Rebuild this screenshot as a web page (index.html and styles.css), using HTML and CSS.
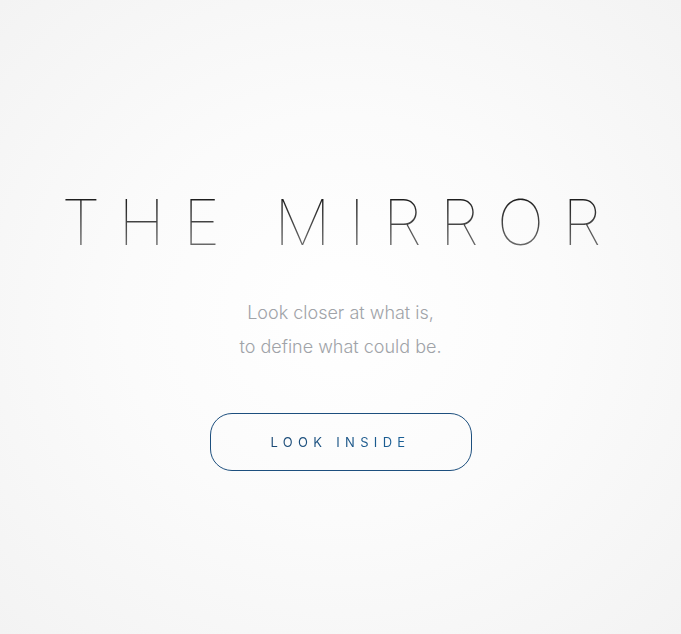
FILE: index.html
```html
<!DOCTYPE html>
<html lang="en">
<head>
<meta charset="utf-8">
<title>The Mirror</title>
<link rel="stylesheet" href="styles.css">
</head>
<body>
<main class="hero">
  <h1 class="title">THE MIRROR</h1>
  <p class="tagline">Look closer at what is,<br>to define what could be.</p>
  <a class="cta" href="#">LOOK INSIDE</a>
</main>
</body>
</html>
```
FILE: styles.css
```css
html, body {
  margin: 0;
  height: 100%;
}
body {
  background: radial-gradient(ellipse at 50% 50%, #ffffff 0%, #fbfbfb 45%, #f3f3f3 100%);
  font-family: Inter, "Liberation Sans", sans-serif;
}
.hero {
  height: 100%;
  box-sizing: border-box;
  padding-top: 28px;
  display: flex;
  flex-direction: column;
  align-items: center;
  justify-content: center;
}
.title {
  margin: 0;
  font-weight: 100;
  font-size: 63px;
  line-height: 1;
  letter-spacing: 18.3px;
  background: linear-gradient(180deg, #111 0%, #777 100%);
  -webkit-background-clip: text;
  background-clip: text;
  color: transparent;
}
.tagline {
  margin: 42px 0 0;
  font-weight: 300;
  font-size: 18px;
  line-height: 34px;
  color: #a0a3a8;
  text-align: center;
}
.cta {
  margin-top: 49px;
  width: 262px;
  height: 58px;
  box-sizing: border-box;
  border: 1px solid #1d4f7e;
  border-radius: 22px;
  display: flex;
  align-items: center;
  justify-content: center;
  text-decoration: none;
  font-size: 13px;
  font-weight: 400;
  letter-spacing: 5.3px;
  background: linear-gradient(90deg, #1b3f66 0%, #1a6aa6 100%);
  -webkit-background-clip: text;
  background-clip: text;
  color: transparent;
}
```
